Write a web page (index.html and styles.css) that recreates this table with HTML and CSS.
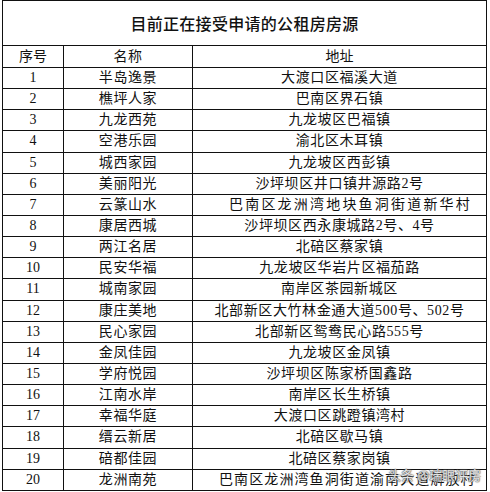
FILE: index.html
```html
<!DOCTYPE html>
<html lang="zh-CN">
<head>
<meta charset="utf-8">
<title>公租房房源</title>
<link rel="stylesheet" href="styles.css">
</head>
<body>
<div class="page">
<table class="sheet">
  <colgroup>
    <col class="c-no">
    <col class="c-name">
    <col class="c-addr">
  </colgroup>
  <tr class="title-row"><td colspan="3" class="title">目前正在接受申请的公租房房源</td></tr>
  <tr class="head-row"><td>序号</td><td class="sp">名称</td><td>地址</td></tr>
  <tr><td>1</td><td class="sp">半岛逸景</td><td class="sp">大渡口区福溪大道</td></tr>
  <tr><td>2</td><td class="sp">樵坪人家</td><td class="sp">巴南区界石镇</td></tr>
  <tr><td>3</td><td class="sp">九龙西苑</td><td class="sp">九龙坡区巴福镇</td></tr>
  <tr><td>4</td><td class="sp">空港乐园</td><td class="sp">渝北区木耳镇</td></tr>
  <tr><td>5</td><td class="sp">城西家园</td><td class="sp">九龙坡区西彭镇</td></tr>
  <tr><td>6</td><td class="sp">美丽阳光</td><td class="sp">沙坪坝区井口镇井源路2号</td></tr>
  <tr><td>7</td><td class="sp">云篆山水</td><td class="wide">巴南区龙洲湾地块鱼洞街道新华村</td></tr>
  <tr><td>8</td><td class="sp">康居西城</td><td class="sp">沙坪坝区西永康城路2号、4号</td></tr>
  <tr><td>9</td><td class="sp">两江名居</td><td class="sp">北碚区蔡家镇</td></tr>
  <tr><td>10</td><td class="sp">民安华福</td><td class="sp">九龙坡区华岩片区福茄路</td></tr>
  <tr><td>11</td><td class="sp">城南家园</td><td class="sp">南岸区茶园新城区</td></tr>
  <tr><td>12</td><td class="sp">康庄美地</td><td class="sp">北部新区大竹林金通大道500号、502号</td></tr>
  <tr><td>13</td><td class="sp">民心家园</td><td class="sp">北部新区鸳鸯民心路555号</td></tr>
  <tr><td>14</td><td class="sp">金凤佳园</td><td class="sp">九龙坡区金凤镇</td></tr>
  <tr><td>15</td><td class="sp">学府悦园</td><td class="sp">沙坪坝区陈家桥国鑫路</td></tr>
  <tr><td>16</td><td class="sp">江南水岸</td><td class="sp">南岸区长生桥镇</td></tr>
  <tr><td>17</td><td class="sp">幸福华庭</td><td class="sp">大渡口区跳蹬镇湾村</td></tr>
  <tr><td>18</td><td class="sp">缙云新居</td><td class="sp">北碚区歇马镇</td></tr>
  <tr><td>19</td><td class="sp">碚都佳园</td><td class="sp">北碚区蔡家岗镇</td></tr>
  <tr><td>20</td><td class="sp">龙洲南苑</td><td class="wide2">巴南区龙洲湾鱼洞街道渝南大道解放村</td></tr>
</table>
<div class="watermark">头条 @瑞眼评房</div>
</div>
</body>
</html>
```

FILE: styles.css
```css
html, body {
  margin: 0;
  padding: 0;
  background: #ffffff;
}

.page {
  position: relative;
  width: 490px;
  height: 492px;
  overflow: hidden;
}

.sheet {
  margin-left: 2px;
  border-collapse: collapse;
  table-layout: fixed;
  width: 484px;
  font-family: "Liberation Serif", "Noto Sans CJK SC", serif;
  font-size: 14px;
  color: #111;
}

.c-no { width: 61px; }
.c-name { width: 129px; }
.c-addr { width: 294px; }

.sheet td {
  border: 1px solid #111;
  padding: 0;
  text-align: center;
  vertical-align: middle;
  line-height: 16px;
  white-space: nowrap;
  overflow: hidden;
}

.sheet tr { height: 21.15px; }

.sheet .title-row { height: 45px; }
.sheet .head-row { height: 22px; }

.title {
  font-family: "Noto Sans CJK SC", sans-serif;
  font-size: 16px;
  font-weight: 500;
  letter-spacing: 0.3px;
  padding-top: 2px;
}

.sp { letter-spacing: 0.6px; }
.wide { letter-spacing: 2.2px; padding-left: 36px !important; text-align: left !important; }
.wide2 { letter-spacing: 1.1px; padding-left: 26px !important; text-align: left !important; }

.watermark {
  position: absolute;
  left: 388px;
  top: 465px;
  font-family: "Noto Sans CJK SC", sans-serif;
  font-size: 13px;
  color: rgba(255, 255, 255, 0.85);
  text-shadow: 0 0 1px #555, 0 0 1px #555, 0 0 2px #777;
  white-space: nowrap;
}
```
